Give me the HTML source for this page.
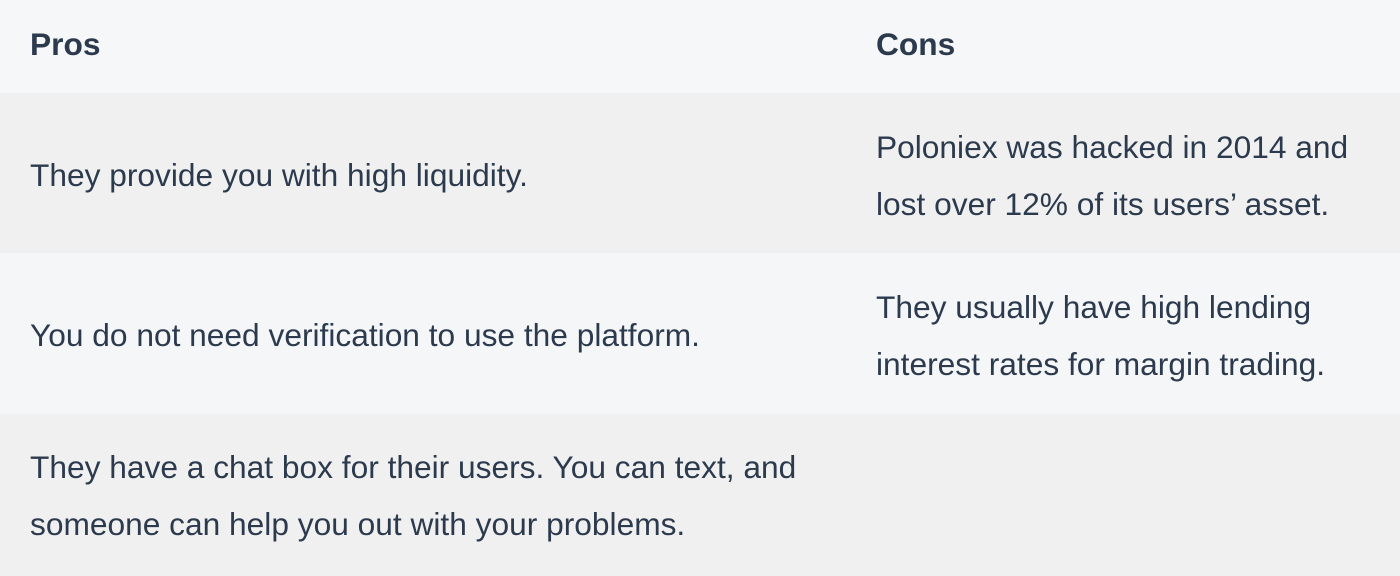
<!DOCTYPE html>
<html><head><meta charset="utf-8"><style>
html,body{margin:0;padding:0;width:1400px;height:576px;overflow:hidden;}
body{font-family:"Liberation Sans",Arial,sans-serif;color:#2c3a4e;font-size:31.7px;}
.row{position:relative;box-sizing:border-box;}
.c1{position:absolute;left:30px;width:830px;}
.c2{position:absolute;left:876px;width:510px;}
.cell{line-height:57px;}
</style></head><body>
<div class="row" style="height:93px;background:#f6f7f9;font-weight:bold;">
<div class="c1 cell" style="top:16px;">Pros</div><div class="c2 cell" style="top:16px;">Cons</div></div>
<div class="row" style="height:160px;background:#f0f0f0;">
<div class="c1 cell" style="top:54px;">They provide you with high liquidity.</div>
<div class="c2 cell" style="top:26px;">Poloniex was hacked in 2014 and lost over 12% of its users’ asset.</div></div>
<div class="row" style="height:161px;background:#f5f6f8;">
<div class="c1 cell" style="top:54px;">You do not need verification to use the platform.</div>
<div class="c2 cell" style="top:26px;">They usually have high lending interest rates for margin trading.</div></div>
<div class="row" style="height:162px;background:#f0f0f0;">
<div class="c1 cell" style="top:25px;">They have a chat box for their users. You can text, and someone can help you out with your problems.</div></div>
</body></html>
